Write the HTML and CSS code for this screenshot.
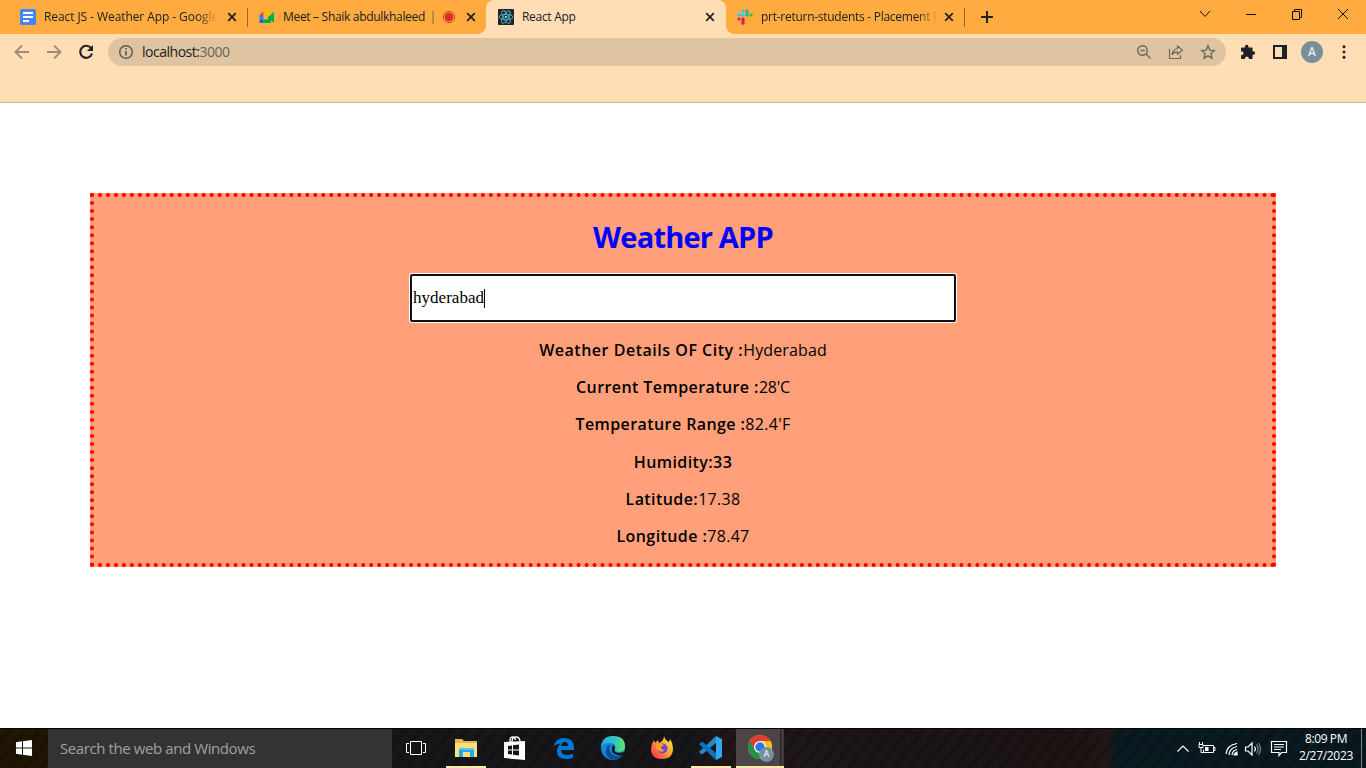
FILE: index.html
```html
<!DOCTYPE html>
<html lang="en">
<head>
<meta charset="utf-8">
<title>React App</title>
<link rel="stylesheet" href="styles.css">
</head>
<body>
<div class="screen">
  <header class="tabstrip">
    <div class="tab tab-first">
      <svg class="favicon" viewBox="0 0 16 16"><rect width="16" height="16" rx="1.5" fill="#4285f4"/><path d="M3 4h10M3 8h10M3 12h6" stroke="#fff" stroke-width="2"/></svg>
      <span class="tab-title fade t-docs">React JS - Weather App - Google</span>
      <svg class="tab-close" viewBox="0 0 10 10"><path d="M1.2 1.2l7.6 7.6M8.800 1.2l-7.600 7.600"/></svg>
      <i class="tab-sep"></i>
    </div>
    <div class="tab tab-meet">
      <svg class="favicon" viewBox="0 0 16 16"><path d="M.5 6L4.500 2v4z" fill="#ea4335"/><path d="M.5 6h4v4.500h-4z" fill="#2684fc"/><path d="M.5 10.500h4V14h-3a1 1 0 0 1-1-1z" fill="#0066da"/><path d="M4.500 2H11q1 0 1 1v5l-3 2V6H4.500z" fill="#ffba00"/><path d="M4.500 10.500H9V8l6-5v10.500l-3-2V13q0 1-1 1H4.500z" fill="#00ac47"/></svg>
      <span class="tab-title t-meet">Meet – Shaik abdulkhaleed <em>|</em></span>
      <svg class="record" viewBox="0 0 12 12"><circle cx="6" cy="6" r="5.500" fill="none" stroke="#d93025"/><circle cx="6" cy="6" r="4.200" fill="#d93025"/></svg>
      <svg class="tab-close" viewBox="0 0 10 10"><path d="M1.200 1.200l7.600 7.600M8.800 1.200l-7.600 7.600"/></svg>
    </div>
    <div class="tab tab-active">
      <svg class="favicon" viewBox="0 0 16 16"><rect width="16" height="16" rx="1" fill="#20232a"/><g fill="none" stroke="#4fb5cf" stroke-width=".9"><ellipse cx="8" cy="8" rx="7" ry="2.700"/><ellipse cx="8" cy="8" rx="7" ry="2.700" transform="rotate(60 8 8)"/><ellipse cx="8" cy="8" rx="7" ry="2.700" transform="rotate(120 8 8)"/></g><circle cx="8" cy="8" r="1.300" fill="#61dafb"/></svg>
      <span class="tab-title t-react">React App</span>
      <svg class="tab-close" viewBox="0 0 10 10"><path d="M1.200 1.200l7.600 7.600M8.800 1.200l-7.600 7.600"/></svg>
    </div>
    <div class="tab tab-slack">
      <svg class="favicon" viewBox="0 0 16 16" fill="none" stroke-width="3.200" stroke-linecap="round"><path d="M1.800 6h4.500M6 1.900v.1" stroke="#36c5f0"/><path d="M10 1.800v4.300M14 6h.1" stroke="#2eb67d"/><path d="M9.800 10h4.400M10 14v.1" stroke="#ecb22e"/><path d="M6 9.900v4.300M2 10h.1" stroke="#e01e5a"/></svg>
      <span class="tab-title fade t-slack">prt-return-students - Placement P</span>
      <svg class="tab-close" viewBox="0 0 10 10"><path d="M1.200 1.200l7.600 7.600M8.800 1.200l-7.600 7.600"/></svg>
      <i class="tab-sep"></i>
    </div>
    <svg class="new-tab" viewBox="0 0 12 12"><path d="M6 0v12M0 6h12" stroke="#202124" stroke-width="2"/></svg>
    <div class="window-buttons">
      <svg viewBox="0 0 12 12"><path d="M1 3l5 5.500L11 3"/></svg>
      <svg viewBox="0 0 12 12"><path d="M1 6.500h10"/></svg>
      <svg viewBox="0 0 12 12"><path d="M1.500 3.500h7v8h-7zM3.500 3.500v-2h7v8h-2"/></svg>
      <svg viewBox="0 0 12 12"><path d="M1 1l10 10M11 1L1 11"/></svg>
    </div>
  </header>
  <nav class="toolbar">
    <div class="nav-row">
      <svg class="nav faded" viewBox="0 0 16 16"><path d="M15 8H2M8 1.500L1.500 8 8 14.500"/></svg>
      <svg class="nav faded" viewBox="0 0 16 16"><path d="M1 8h13M8 1.500L14.500 8 8 14.500"/></svg>
      <svg class="nav reload" viewBox="0 0 16 16"><path d="M13.200 4.400A6 6 0 1 0 14 9.500"/><path d="M15 1v6H9z" fill="#202124" stroke="none"/></svg>
      <div class="omnibox">
        <svg class="info" viewBox="0 0 16 16"><circle cx="8" cy="8" r="6.300"/><path d="M8 7v4.500M8 4v1.500" stroke-width="1.700"/></svg>
        <span class="url">localhost:<b>3000</b></span>
        <span class="omni-icons">
          <svg viewBox="0 0 16 16"><circle cx="6.500" cy="6.500" r="4.800"/><path d="M4.300 6.500h4.400M10 10l4.500 4.500"/></svg>
          <svg viewBox="0 0 16 16"><path d="M1.500 5v9.500h11V11" stroke-width="1.200"/><path d="M9.500 2l5 4.200-5 4.100V8q-3.500-.3-5.500 2.800Q4.800 5 9.500 4.500z" stroke-width="1.200"/></svg>
          <svg viewBox="0 0 16 16"><path d="M8 1.800l1.800 4.300 4.700.4-3.500 3.100 1 4.600L8 11.800l-4 2.400 1-4.600-3.500-3.100 4.700-.4z"/></svg>
        </span>
      </div>
      <div class="actions">
        <svg viewBox="0 0 16 16"><path d="M1 4.500q0-1 1-1h3q-.5-2.800 1.700-2.800T8.400 3.500h3.200q1 0 1 1v2.800q2.700 0 2.700 1.800t-2.700 1.800v3.200q0 1-1 1H8.900q0-2.500-2-2.500t-2 2.500H2q-1 0-1-1v-2.800q2.600 0 2.600-2T1 7.300z" fill="#202124"/></svg>
        <svg viewBox="0 0 16 16"><path d="M2 2h12v12H2z" fill="none" stroke="#202124" stroke-width="2"/><path d="M10 2h4v12h-4z" fill="#202124"/></svg>
        <span class="avatar">A</span>
        <svg viewBox="0 0 16 16" fill="#202124"><circle cx="8" cy="2.800" r="1.500"/><circle cx="8" cy="8" r="1.500"/><circle cx="8" cy="13.200" r="1.500"/></svg>
      </div>
    </div>
  </nav>
  <main class="page">
    <section class="weather">
      <h1>Weather APP</h1>
      <div class="city-input">hyderabad<i class="caret"></i></div>
      <p class="city"><b>Weather Details OF City :</b><span>Hyderabad</span></p>
      <p class="celsius"><b>Current Temperature :</b><span>28'C</span></p>
      <p><b>Temperature Range :</b><span>82.4'F</span></p>
      <p><b>Humidity:33</b></p>
      <p><b>Latitude:</b><span>17.38</span></p>
      <p><b>Longitude :</b><span>78.47</span></p>
    </section>
  </main>
  <footer class="taskbar">
    <div class="start"><svg viewBox="0 0 16 16" fill="#fff"><path d="M0 2.200l6-.9v6.200H0zM7 1.200L16 0v7.500H7zM0 8.500h6v6.200l-6-.9zM7 8.500h9V16l-9-1.200z"/></svg></div>
    <div class="search"><span>Search the web and Windows</span></div>
    <div class="apps">
      <div class="app task-view"><svg width="20" height="16" viewBox="0 0 20 16" fill="none" stroke="#fff"><path d="M4.500 1.500h11v13h-11zM3 3.500H.5v9H3M17 3.500h2.500v9H17"/></svg></div>
      <div class="app running"><svg width="24" height="24" viewBox="0 0 24 24"><path d="M1 3h7l2 2h13v15H1z" fill="#e8b64c"/><path d="M1 7h22v14H1z" fill="#fddf7c"/><path d="M5 13h15v8h-4v-5H9v5H5z" fill="#27a9e8"/><path d="M5 12h15v2H5z" fill="#58c5f2"/></svg></div>
      <div class="app"><svg width="24" height="26" viewBox="0 0 24 26"><path d="M7 8V5q0-3 3-3 2 0 2.500 3M9 7q0-5 4-5t4 5" fill="none" stroke="#fff" stroke-width="1.300"/><path d="M1 7l21-1v19l-21-2z" fill="#fff"/><path d="M5 11l4-.5v4H5zM10 10.300l6-.7v5h-6zM5 15.500h4v4l-4-.5zM10 15.500h6v5l-6-.8z" fill="#171419"/></svg></div>
      <div class="app"><svg width="24" height="24" viewBox="0 0 24 24"><path d="M2 10Q4 2 12 2q10 0 10 10v2H9q0 5 6 5 3 0 6-1.500v4Q18 23 14 23q-9 0-9-8 0-5 4-7.500-4 0-7 2.500zm7 0h7q0-4-3.300-4Q10 6 9 10z" fill="#0078d7"/></svg></div>
      <div class="app"><svg width="26" height="26" viewBox="0 0 26 26"><defs><linearGradient id="eg" x1="0" x2="1"><stop stop-color="#25a9ee"/><stop offset=".6" stop-color="#32c7bd"/><stop offset="1" stop-color="#6be15b"/></linearGradient></defs><circle cx="13" cy="13" r="12" fill="#1b83d3"/><path d="M1 12Q2 1 13 1q12 0 12 10 0 6-6 6-5 0-4-3 2-6-5-6-7 0-9 4z" fill="url(#eg)"/><path d="M10 10q-2 5 2 9t11 0q-4 7-12 5.500Q3 20 7 12q1-2 3-2z" fill="#0d4d91"/><path d="M13 10q3 2 1.500 4.500Q14 18 20 18l4-1q2-1 1-3l1 4-2 2q-3 1-6 0-7-1-6-7 .3-2 1-3z" fill="#151417"/></svg></div>
      <div class="app"><svg width="26" height="26" viewBox="0 0 26 26"><defs><linearGradient id="fg" x1="1" x2="0" y1="0" y2="1"><stop stop-color="#fff14d"/><stop offset=".5" stop-color="#ff9a2c"/><stop offset="1" stop-color="#f9205c"/></linearGradient></defs><path d="M15 1q1 4 5 6l1-3q3 4 3 9 0 11-11 11T2 14q0-5 3-9l1 3 3-3 1 3q5-2 5-7z" fill="url(#fg)"/><circle cx="13.500" cy="13.500" r="5" fill="#6a45dc"/><path d="M7 9q4-2 8 1l-3 2q0 3 4 3-3 3-6 1-4-3-3-7z" fill="#ff9d28"/></svg></div>
      <div class="app running"><svg width="24" height="24" viewBox="0 0 24 24"><path d="M17 0l6 3v18l-6 3z" fill="#2fa8f4"/><path d="M17 0v7L3 18.500l-3-2.500z" fill="#2489ca"/><path d="M17 24v-7L3 5.500 0 8z" fill="#0d72bd"/></svg></div>
      <div class="app current"><svg width="28" height="28" viewBox="0 0 28 28"><circle cx="13" cy="13" r="12" fill="#fbc116"/><path d="M2.600 7A12 12 0 0 0 13 25l5-9-5-3z" fill="#229342"/><path d="M13 7h10.400A12 12 0 0 1 13 25l5.200-9z" fill="#fbc116"/><path d="M13 7h10.400A12 12 0 0 0 2.600 7l5.200 9z" fill="#e33b2e"/><circle cx="13" cy="13" r="6" fill="#fff"/><circle cx="13" cy="13" r="4.700" fill="#2878e6"/></svg><span class="badge">A</span></div>
    </div>
    <div class="tray">
      <svg width="14" height="14" viewBox="0 0 14 14"><path d="M1.500 9.500L7 4l5.500 5.500"/></svg>
      <svg width="18" height="16" viewBox="0 0 18 16"><path d="M5.500 4.500h10v7h-10v-3M15.500 6.500h1.500v3h-1.500" stroke-width="1"/><path d="M1.500 1v3M4.500 1v3M3 7v4.500h2.500" stroke-width="1"/><path d="M1 3.500h4v3H1z" stroke-width="1"/><path d="M7 6h3.500v4H7z" fill="#fff" stroke="none"/></svg>
      <svg class="wifi" width="16" height="16" viewBox="0 0 16 16"><path d="M2 13Q3 4 13 2.500M5 14q.5-7 8-8.500M8 14q.5-4.500 5-5.500"/><path d="M10 14q.3-2 3-3v3z" fill="#fff"/></svg>
      <svg width="18" height="16" viewBox="0 0 18 16"><path d="M1.500 6h2.500l4-4v12l-4-4H1.500zM10.500 5.500q1.800 2.500 0 5"/><path d="M12.500 3.500q3 4.500 0 9M14.500 2q4 6 0 12" stroke="#81898d"/></svg>
      <svg width="18" height="18" viewBox="0 0 18 18"><path d="M1.500 1.500h15v11h-5l-2.500 3v-3H1.500zM4 4.500h10M4 7h10M4 9.500h7"/></svg>
    </div>
    <div class="clock"><span class="time">8:09 PM</span><span class="date">2/27/2023</span></div>
    <i class="show-desktop"></i>
  </footer>
</div>
</body>
</html>
```
FILE: styles.css
```css
* { box-sizing: border-box; }
body { margin: 0; font-family: "Open Sans", "Noto Sans", sans-serif; }
svg { flex: none; display: block; }
.screen { width: 1366px; height: 768px; display: flex; flex-direction: column; overflow: hidden; background: #fff; }

.tabstrip { height: 34px; flex: none; display: flex; background: #ffab40; color: #202124; font-size: 12px; }
.tab { position: relative; width: 239px; padding: 0 11px; display: flex; align-items: center; }
.tab-first { width: 248px; padding-left: 20px; }
.tab-meet { width: 238px; padding-right: 10px; }
.tab-active { width: 240px; padding-left: 12px; background: #ffddb5; border-radius: 8px 8px 0 0; }
.tab-active::before, .tab-active::after { content: ""; position: absolute; bottom: 0; width: 8px; height: 8px; }
.tab-active::before { left: -8px; background: radial-gradient(circle at 0 0, #ffab40 7.500px, #ffddb5 8px); }
.tab-active::after { right: -8px; background: radial-gradient(circle at 100% 0, #ffab40 7.500px, #ffddb5 8px); }
.favicon { width: 16px; height: 16px; margin-right: 8px; }
.tab-title { white-space: nowrap; width: 174px; line-height: 18px; }
.fade { -webkit-mask-image: linear-gradient(90deg, #000 88%, transparent 100%); mask-image: linear-gradient(90deg, #000 88%, transparent 100%); }
.t-docs { letter-spacing: -.08px; }
.t-meet { width: 150px; letter-spacing: -.31px; }
.t-meet em { font-style: normal; opacity: .6; margin-left: 2px; }
.t-react { letter-spacing: -.3px; }
.t-slack { letter-spacing: -.27px; width: 177px; }
.record { width: 12px; height: 12px; margin-left: 10px; }
.tab-close { width: 10px; height: 10px; margin-left: auto; stroke: #202124; stroke-width: 1.700; fill: none; }
.tab-sep { position: absolute; right: 0; top: 8px; width: 1px; height: 19px; background: #94682f; }
.new-tab { width: 12px; height: 12px; margin: 11px 0 0 16px; }
.window-buttons { display: flex; margin-left: auto; padding: 8px 17px 0 0; gap: 34px; }
.window-buttons svg { width: 12px; height: 12px; fill: none; stroke: #111; }

.toolbar { height: 69px; flex: none; background: #ffddb5; border-bottom: 1px solid #cdb497; padding: 4px 0 0 14px; }
.nav-row { display: flex; align-items: center; height: 28px; }
.nav { width: 16px; height: 16px; margin-right: 16px; fill: none; stroke: #202124; stroke-width: 1.900; }
.reload { margin-right: 14px; stroke-width: 2.100; }
.faded { opacity: .42; }
.omnibox { width: 1118px; flex: none; height: 28px; border-radius: 14px; background: #dfc4a1; display: flex; align-items: center; padding: 0 10px; }
.info { width: 16px; height: 16px; fill: none; stroke: #5f5a55; stroke-width: 1.500; }
.url { margin-left: 8px; font-size: 14px; letter-spacing: -.48px; color: #202124; position: relative; top: -1px; }
.url b { font-weight: 400; color: #6a635b; }
.omni-icons { display: flex; gap: 16px; margin-left: auto; }
.omni-icons svg { width: 16px; height: 16px; fill: none; stroke: #6d675f; stroke-width: 1.400; }
.actions { display: flex; align-items: center; margin-left: 14px; }
.actions svg { width: 16px; height: 16px; margin-right: 16px; }
.actions svg:nth-child(2) { margin-right: 13px; }
.actions svg:last-child { margin-right: 0; }
.avatar { width: 22px; height: 22px; border-radius: 50%; background: #78909c; color: #fff; font: 12px/22px Roboto, sans-serif; text-align: center; margin-right: 13px; }

.page { flex: 1; padding: 90px; }
.weather { height: 374px; border: 4px dotted red; background: #ffa07a; display: flex; flex-direction: column; align-items: center; color: #000; }
h1 { margin: 18px 0 0; height: 44px; line-height: 44px; font-size: 29px; font-weight: 700; color: #00f; letter-spacing: -.8px; white-space: nowrap; }
.city-input { width: 546px; height: 48px; margin: 15px 0 10px; border: 2px solid #101010; border-radius: 2px; box-shadow: 0 0 0 1px #fff; background: #fff; display: flex; align-items: center; padding-left: 1px; font: 17px "Liberation Serif", serif; letter-spacing: .03px; flex: none; }
.caret { width: 1px; height: 19px; background: #000; }
.weather p { margin: 0; height: 37.200px; line-height: 37.200px; font-size: 16px; white-space: nowrap; flex: none; }
.weather b { font-weight: 600; letter-spacing: .42px; }
.weather p span { letter-spacing: .3px; }
.weather .city b { letter-spacing: .52px; }
.weather .city span { letter-spacing: .12px; }
.weather .celsius span { letter-spacing: -.2px; }

.taskbar { height: 40px; flex: none; display: flex; border-top: 1px solid #050505; color: #fff;
  background: repeating-linear-gradient(128deg, #0000 0 5px, #00000030 7px 9px, #0000 12px), linear-gradient(125deg, #0000 1100px, #0000 1101px), linear-gradient(90deg, #211604 0, #211604 48px, #171719 390px, #171719 690px, #201719 725px, #1c1516 900px, #1e1514 1090px, #231817 1105px, #0a1b22 1118px, #081a20 1366px); }
.start { width: 48px; display: flex; align-items: center; justify-content: center; padding-bottom: 1px; }
.start svg { width: 16px; height: 16px; }
.search { width: 344px; background: #333; color: #a0a0a0; font-size: 15px; line-height: 38px; padding-left: 12px; letter-spacing: -.41px; white-space: nowrap; }
.apps { display: flex; }
.app { position: relative; width: 49px; display: flex; align-items: center; justify-content: center; padding-bottom: 1px; }
.task-view { padding-right: 1px; }
.running::after { content: ""; position: absolute; left: 5px; bottom: 0; width: 40px; height: 2px; background: #fde7ac; }
.current { width: 48px; margin-left: 1px; padding: 1px 0 0 2px; background: linear-gradient(90deg, #4b4546 44px, #292526 44px, #292526 45px, #413b3c 45px); border-bottom: 2px solid #fde7ac; }
.badge { position: absolute; left: 23px; top: 18px; width: 15px; height: 15px; border-radius: 50%; background: #78909c; font: 9px/15px Roboto, sans-serif; text-align: center; }
.tray { display: flex; align-items: center; gap: 8px; margin-left: auto; }
.tray svg { fill: none; stroke: #fff; stroke-width: 1.200; }
.tray .wifi { margin-right: -4px; }
.clock { width: 70px; margin-left: 3px; display: flex; flex-direction: column; align-items: center; font-size: 12px; line-height: 17px; padding-top: 1px; }
.time { letter-spacing: -.4px; }
.date { letter-spacing: -.3px; }
.show-desktop { width: 5px; border-left: 1px solid #7b8689; }
```
